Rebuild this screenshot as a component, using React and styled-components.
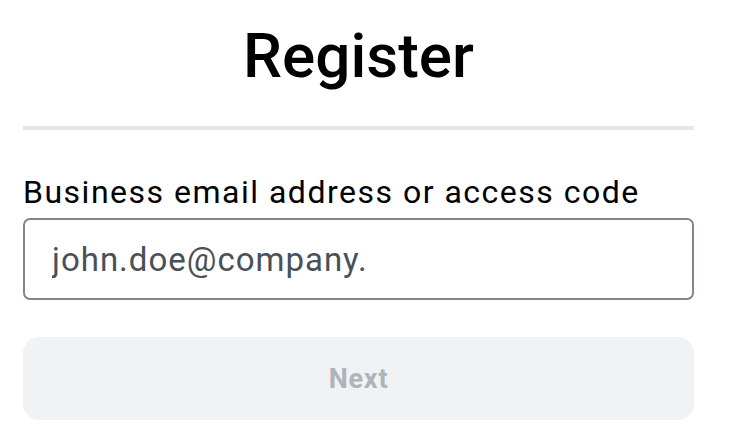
import React from 'react';
import styled, { createGlobalStyle } from 'styled-components';

const GlobalStyle = createGlobalStyle`
  html, body {
    margin: 0;
    padding: 0;
    background: #ffffff;
  }
  body {
    font-family: Roboto, "Liberation Sans", Arial, sans-serif;
    color: #000000;
  }
`;

const Page = styled.div`
  width: 671px;
  margin-left: 23px;
  display: flex;
  flex-direction: column;
`;

const Title = styled.h1`
  margin: 0;
  padding-top: 16px;
  height: 108px;
  box-sizing: border-box;
  text-align: center;
  font-size: 62px;
  font-weight: 500;
  line-height: 80px;
`;

const Divider = styled.hr`
  margin: 18px 0 0;
  border: none;
  height: 4px;
  background: #e6e6e6;
`;

const Field = styled.label`
  display: flex;
  flex-direction: column;
  margin-top: 42px;
`;

const Label = styled.span`
  font-size: 32px;
  line-height: 40px;
  letter-spacing: 1.5px;
  color: #000000;
  margin-bottom: 6px;
`;

const Input = styled.input`
  height: 82px;
  box-sizing: border-box;
  border: 2px solid #7f8891;
  border-radius: 7px;
  padding: 0 27px;
  font-family: Roboto, "Liberation Sans", Arial, sans-serif;
  font-size: 33px;
  letter-spacing: 1px;
  color: #4a5059;
  outline: none;
  background: #ffffff;
`;

const NextButton = styled.button`
  margin-top: 37px;
  height: 83px;
  border: none;
  border-radius: 16px;
  background: #f1f2f4;
  color: #adb4bc;
  font-family: Roboto, "Liberation Sans", Arial, sans-serif;
  font-size: 27px;
  font-weight: 700;
  letter-spacing: 0.8px;
  cursor: not-allowed;
`;

export default function App() {
  return (
    <>
      <GlobalStyle />
      <Page>
        <Title>Register</Title>
        <Divider />
        <Field>
          <Label>Business email address or access code</Label>
          <Input type="text" defaultValue="john.doe@company." />
        </Field>
        <NextButton disabled>Next</NextButton>
      </Page>
    </>
  );
}
